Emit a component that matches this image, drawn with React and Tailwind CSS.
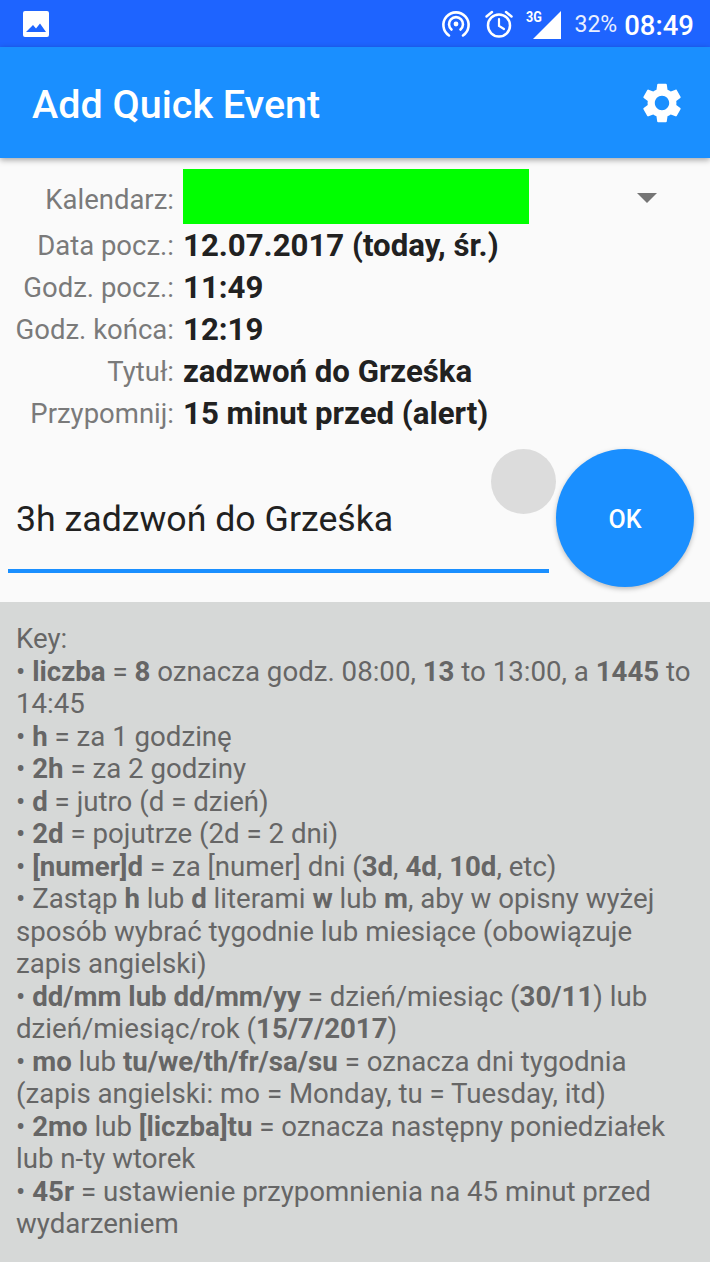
import { useState } from "react";

const rows = [
  ["Data pocz.:", "12.07.2017 (today, śr.)"],
  ["Godz. pocz.:", "11:49"],
  ["Godz. końca:", "12:19"],
  ["Tytuł:", "zadzwoń do Grześka"],
  ["Przypomnij:", "15 minut przed (alert)"],
];

const StatusIcons = () => (
  <div className="flex items-center text-white">
    <svg width="30" height="30" viewBox="0 0 30 30" fill="none" stroke="white" strokeWidth="2.6" strokeLinecap="round" className="mr-[13px]">
      <path d="M8 26.5 A12.6 12.6 0 1 1 22 26.5" />
      <path d="M10.5 20.5 A7 7 0 1 1 19.5 20.5" />
      <circle cx="15" cy="15" r="2.4" fill="white" stroke="none" />
    </svg>
    <svg width="30" height="30" viewBox="0 0 30 30" fill="none" stroke="white" strokeWidth="2.5" strokeLinecap="round" className="mr-[14px]">
      <circle cx="15" cy="16.5" r="11" />
      <path d="M15 10 V17 L20 20" strokeWidth="2.2" />
      <path d="M2.5 7.5 L8 3" />
      <path d="M27.5 7.5 L22 3" />
    </svg>
    <div className="relative w-[32px] h-[32px] mr-[15px]">
      <span className="absolute left-[-2px] top-[2px] text-[14px] leading-[14px] font-bold scale-x-90 origin-left">3G</span>
      <svg width="28" height="28" viewBox="0 0 28 28" className="absolute left-[5px] top-[3px]">
        <path d="M0 28 L28 0 V28 Z" fill="white" />
      </svg>
    </div>
    <span className="text-[23px] mr-[7px] opacity-90 relative top-[2px]">32%</span>
    <span className="text-[27.5px] font-medium mr-[16px] relative top-[2px]">08:49</span>
  </div>
);

const Key = ({ children }) => <b className="font-bold">{children}</b>;

const App = () => {
  const [text] = useState("3h zadzwoń do Grześka");

  return (
    <div className="w-[710px] h-[1262px] overflow-hidden flex flex-col bg-[#fafafa] font-['Roboto',sans-serif]">
      <div className="h-[47px] shrink-0 bg-[#1e64ff] flex items-center justify-between">
        <svg width="26" height="26" viewBox="0 0 26 26" className="ml-[23px]">
          <path fillRule="evenodd" d="M2 0 H24 A2 2 0 0 1 26 2 V24 A2 2 0 0 1 24 26 H2 A2 2 0 0 1 0 24 V2 A2 2 0 0 1 2 0 Z M3 21 H23 L17 12.5 L13 17.5 L10 14 Z" fill="white" />
        </svg>
        <StatusIcons />
      </div>

      <div className="h-[111px] shrink-0 bg-[#1a8fff] flex items-center justify-between pl-[32px] pr-[24px] shadow-[0_2px_6px_rgba(0,0,0,0.35)] relative z-10">
        <h1 className="text-[39.5px] font-medium text-white relative top-[2px]">Add Quick Event</h1>
        <svg width="48" height="48" viewBox="0 0 24 24" fill="white">
          <path d="M19.14 12.94c.04-.3.06-.61.06-.94 0-.32-.02-.64-.07-.94l2.03-1.58c.18-.14.23-.41.12-.61l-1.92-3.32c-.12-.22-.37-.29-.59-.22l-2.39.96c-.5-.38-1.03-.7-1.62-.94l-.36-2.54c-.04-.24-.24-.41-.48-.41h-3.84c-.24 0-.43.17-.47.41l-.36 2.54c-.59.24-1.13.57-1.62.94l-2.39-.96c-.22-.08-.47 0-.59.22L2.74 8.87c-.12.21-.08.47.12.61l2.03 1.58c-.05.3-.09.63-.09.94s.02.64.07.94l-2.03 1.58c-.18.14-.23.41-.12.61l1.92 3.32c.12.22.37.29.59.22l2.39-.96c.5.38 1.03.7 1.62.94l.36 2.54c.05.24.24.41.48.41h3.84c.24 0 .44-.17.47-.41l.36-2.54c.59-.24 1.13-.56 1.62-.94l2.39.96c.22.08.47 0 .59-.22l1.92-3.32c.12-.22.07-.47-.12-.61l-2.01-1.58zM12 15.6c-1.98 0-3.6-1.62-3.6-3.6s1.62-3.6 3.6-3.6 3.6 1.62 3.6 3.6-1.62 3.6-3.6 3.6z" />
        </svg>
      </div>

      <div className="h-[444px] shrink-0 flex flex-col relative">
        <div className="flex items-center mt-[11px] h-[55px]">
          <span className="w-[174px] pt-[7px] text-right text-[27.5px] text-[#7a7a7a]">Kalendarz:</span>
          <div className="ml-[9px] w-[346px] h-[55px] bg-[#00ff00]" />
          <div className="ml-[108px] w-0 h-0 border-x-[10px] border-x-transparent border-t-[10px] border-t-[#757575] mt-[3px]" />
        </div>
        <div className="flex flex-col mt-[1px]">
          {rows.map(([label, value]) => (
            <div key={label} className="flex items-center h-[42px]">
              <span className="w-[174px] text-right text-[27.5px] text-[#7a7a7a]">{label}</span>
              <span className="ml-[9px] text-[31.2px] font-bold text-[#212121]">{value}</span>
            </div>
          ))}
        </div>

        <div className="flex mt-[14px] pl-[8px] pr-[16px] items-start justify-between">
          <div className="w-[541px] mt-[30px] h-[94px] border-b-[4px] border-[#1a8fff] flex items-center pl-[8px] pb-[8px]">
            <span className="text-[35.7px] text-[#212121]">{text}</span>
          </div>
          <button className="w-[138px] h-[138px] rounded-full bg-[#1a8fff] text-white text-[25px] font-medium pt-[3px] shadow-[0_2px_5px_rgba(0,0,0,0.25)]">
            OK
          </button>
        </div>
        <div className="absolute left-[491px] top-[291px] w-[65px] h-[65px] rounded-full bg-[#dcdcdc]" />
      </div>

      <div className="flex-1 bg-[#d6d8d7] px-[16px] pt-[21px] text-[27.65px] leading-[32.5px] text-[#666666]">
        <p>Key:</p>
        <p>• <Key>liczba</Key> = <Key>8</Key> oznacza godz. 08:00, <Key>13</Key> to 13:00, a <Key>1445</Key> to 14:45</p>
        <p>• <Key>h</Key> = za 1 godzinę</p>
        <p>• <Key>2h</Key> = za 2 godziny</p>
        <p>• <Key>d</Key> = jutro (d = dzień)</p>
        <p>• <Key>2d</Key> = pojutrze (2d = 2 dni)</p>
        <p>• <Key>[numer]d</Key> = za [numer] dni (<Key>3d</Key>, <Key>4d</Key>, <Key>10d</Key>, etc)</p>
        <p>• Zastąp <Key>h</Key> lub <Key>d</Key> literami <Key>w</Key> lub <Key>m</Key>, aby w opisny wyżej sposób wybrać tygodnie lub miesiące (obowiązuje zapis angielski)</p>
        <p>• <Key>dd/mm lub dd/mm/yy</Key> = dzień/miesiąc (<Key>30/11</Key>) lub dzień/miesiąc/rok (<Key>15/7/2017</Key>)</p>
        <p>• <Key>mo</Key> lub <Key>tu/we/th/fr/sa/su</Key> = oznacza dni tygodnia (zapis angielski: mo = Monday, tu = Tuesday, itd)</p>
        <p>• <Key>2mo</Key> lub <Key>[liczba]tu</Key> = oznacza następny poniedziałek lub n-ty wtorek</p>
        <p>• <Key>45r</Key> = ustawienie przypomnienia na 45 minut przed wydarzeniem</p>
      </div>
    </div>
  );
};

export default App;
